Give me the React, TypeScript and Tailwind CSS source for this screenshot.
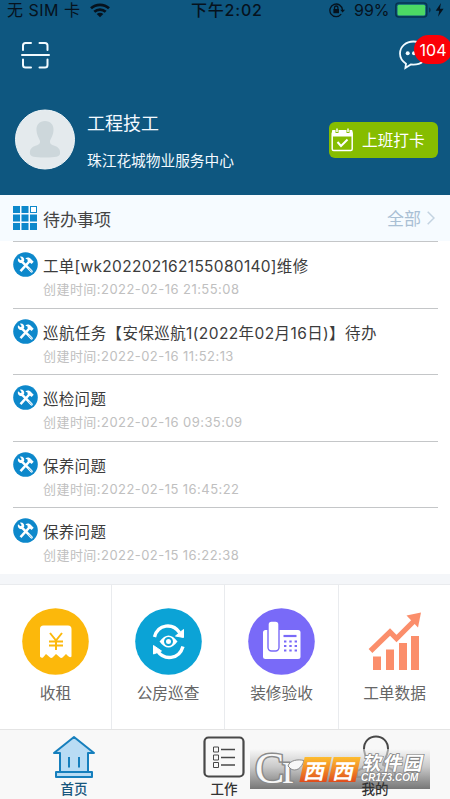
import React from 'react';

const FONT = "font-['Inter','Noto_Sans_CJK_SC',sans-serif]";

type Todo = {
  title: string;
  time: string;
  spacing: string;
};

const todos: Todo[] = [
  { title: '工单[wk202202162155080140]维修', time: '2022-02-16 21:55:08', spacing: 'tracking-[0.3px]' },
  { title: '巡航任务【安保巡航1(2022年02月16日)】待办', time: '2022-02-16 11:52:13', spacing: 'tracking-[0.4px]' },
  { title: '巡检问题', time: '2022-02-16 09:35:09', spacing: 'tracking-[0.3px]' },
  { title: '保养问题', time: '2022-02-15 16:45:22', spacing: 'tracking-[0.3px]' },
  { title: '保养问题', time: '2022-02-15 16:22:38', spacing: 'tracking-[0.3px]' },
];

const ToolsIcon: React.FC = () => (
  <svg className="mt-[10px] h-[25px] w-[25px] shrink-0" viewBox="0 0 25 25">
    <circle cx="12.5" cy="12.5" r="12.3" fill="#0d88cb" />
    <g stroke="#fff" strokeLinecap="round" fill="none">
      <path d="M8.5 9.2L18.6 19.4" strokeWidth="2.5" />
      <path d="M7.5 19.2L16.8 9" strokeWidth="2.5" strokeLinecap="butt" />
    </g>
    <path d="M5 6.2L7.6 8.3L8.8 7.2L7 4.7C9.7 4.2 11.7 6 11.2 8.8L8.8 11.1C6.2 11.4 4.2 9.2 5 6.2Z" fill="#fff" />
    <path d="M12.3 6.4C14.5 5 16.8 5.6 18.2 7.2L20.7 9.8L18.6 11.9L16.5 10.2L14.7 9.6L14.5 7.6Z" fill="#fff" />
    <path d="M15.8 16.5L18.9 19.7" stroke="#0d88cb" strokeWidth="0.6" />
  </svg>
);

const StatusBar: React.FC = () => (
  <div className="flex h-5 items-center text-[16px] leading-5 text-[#06121d]">
    <span className="ml-[7px] w-[83px] whitespace-nowrap tracking-[0.5px]">无 SIM 卡</span>
    <svg className="h-[15px] w-5" viewBox="0 0 20 15" fill="none" stroke="#06121d" strokeWidth="2.7">
      <path d="M1 5.3C6 0.6 14 0.6 19 5.3" />
      <path d="M4.3 8.8C7.6 5.8 12.4 5.8 15.7 8.8" />
      <path d="M10 14.2L6.7 11C8.6 9.4 11.4 9.4 13.3 11Z" fill="#06121d" stroke="none" />
    </svg>
    <span className="ml-[81px] w-[73px] whitespace-nowrap font-medium tracking-[0.8px]">下午2:02</span>
    <svg className="ml-[65px] h-4 w-4" viewBox="0 0 16 16" fill="none" stroke="#06121d" strokeWidth="1.3">
      <path d="M12.2 12.2A6.3 6.3 0 1 1 13.5 8" />
      <path d="M11.2 7.7H16L13.6 10.6Z" fill="#06121d" stroke="none" />
      <rect x="4.4" y="7" width="5.6" height="4.2" fill="#06121d" stroke="none" />
      <path d="M5.5 7V5.4C5.5 3.5 8.9 3.5 8.9 5.4V7" />
    </svg>
    <span className="ml-[9px] w-9 whitespace-nowrap">99%</span>
    <svg className="ml-[5px] h-4 w-[52px]" viewBox="0 0 52 16">
      <rect x="0.8" y="1" width="31" height="14" rx="3" fill="none" stroke="#073450" strokeWidth="1.5" />
      <rect x="2.5" y="2.7" width="27.7" height="10.7" rx="1.5" fill="#4cd964" />
      <path d="M34 5.5C36.3 6 36.3 10 34 10.5Z" fill="#073450" />
      <path d="M46 1L40.7 8.8H44.3L43 14.7L48.6 6.7H44.9Z" fill="#06121d" />
    </svg>
  </div>
);

const Header: React.FC = () => (
  <header className="h-[195px] bg-[#0e5780]">
    <StatusBar />
    <div className="flex h-[62px] items-start justify-between pt-[20px] pl-[21px]">
      <svg className="mt-px h-[29px] w-[29px]" viewBox="0 0 29 29" fill="none" stroke="#f2fbff" strokeWidth="2" strokeLinecap="round">
        <path d="M2 9V4.5Q2 2 4.5 2H10M18.5 2H24Q26.5 2 26.5 4.5V9M2 18.5V24Q2 26.5 4.5 26.5H10M18.5 26.5H24Q26.5 26.5 26.5 24V18.5" />
        <path d="M1 14H28" />
      </svg>
      <div className="relative h-[30px] w-[51px]">
        <svg className="h-[30px] w-[30px]" viewBox="0 0 30 30" fill="none" stroke="#f2fbff" strokeWidth="1.8">
          <path d="M7 23.7C3 21 1 17.7 1 13.5C1 6.5 7 1.5 14.5 1.5S28 6.5 28 13.3S22 24.6 14.5 24.6L11.8 24.4L6.4 28Z" />
          <g fill="#f2fbff" stroke="none">
            <circle cx="8.7" cy="13.3" r="2" />
            <circle cx="15" cy="13.3" r="2" />
            <circle cx="21" cy="13.3" r="2" />
          </g>
        </svg>
        <span className="absolute top-[-5px] left-[15px] flex h-[29px] w-[38px] items-center justify-center rounded-full bg-[#fb0007] text-[16px] text-white">
          104
        </span>
      </div>
    </div>
    <div className="flex pt-[27px] pl-[15px]">
      <svg className="h-[61px] w-[60px]" viewBox="0 0 60 61">
        <circle cx="30" cy="30.5" r="29.5" fill="#e4eaed" stroke="#f1f6f8" strokeWidth="1" />
        <path
          d="M30 12C35.5 12 39 16 38.5 21.5C38 27 35.5 30 35 32C34.6 35 37 36 40 37C44 38.5 45.5 41 45 45C44.5 47.5 41 48.5 30 48.5S15.5 47.5 15 45C14.5 41 16 38.5 20 37C23 36 25.4 35 25 32C24.5 30 22 27 21.5 21.5C21 16 24.5 12 30 12Z"
          fill="#cdd7db"
        />
      </svg>
      <div className="ml-3 w-[242px] text-[#f4faff]">
        <p className="mt-[3px] text-[18px] leading-[24px]">工程技工</p>
        <p className="mt-[15px] text-[14.7px] leading-[20px]">珠江花城物业服务中心</p>
      </div>
      <button className="mt-[13px] flex h-9 w-[109px] items-center rounded-[6px] bg-[#86bd00] text-white">
        <svg className="ml-[2px] h-6 w-[23px]" viewBox="0 0 23 24" fill="none" stroke="#fff">
          <rect x="1.2" y="4" width="20" height="18.5" rx="1.5" strokeWidth="1.5" />
          <path d="M1.5 2.5H21V8H1.5Z" fill="#fff" strokeWidth="1" />
          <path d="M6 0V5M17 0V5" stroke="#86bd00" strokeWidth="3" />
          <path d="M6 0.5V4M17 0.5V4" strokeWidth="1.5" />
          <path d="M6.5 14L10 18L16.5 11.5" strokeWidth="2" />
        </svg>
        <span className="mt-px ml-[8px] whitespace-nowrap text-[15.7px] leading-5">上班打卡</span>
      </button>
    </div>
  </header>
);

const TodoHeader: React.FC = () => (
  <div className="flex h-[46px] items-center bg-[#f6fbff] pr-[15px] pl-[13px]">
    <svg className="h-6 w-6" viewBox="0 0 24 24" fill="#0d88cb">
      <path d="M0 0H7V7H0ZM8.5 0H15.5V7H8.5ZM0 8.5H7V15.5H0ZM8.5 8.5H15.5V15.5H8.5ZM17 8.5H24V15.5H17ZM0 17H7V24H0ZM8.5 17H15.5V24H8.5ZM17 17H24V24H17Z" />
      <rect x="17.5" y="0.5" width="6" height="6" fill="#fff" stroke="#0d88cb" />
    </svg>
    <h2 className="mt-[3px] ml-[6px] flex-1 text-[17px] leading-6 text-[#444]">待办事项</h2>
    <span className="mt-[2px] text-[17px] leading-6 text-[#a9bfd4]">全部</span>
    <svg className="ml-[6px] h-[14px] w-[8px]" viewBox="0 0 8 14" fill="none" stroke="#c3d3e1" strokeWidth="1.5">
      <path d="M0.7 0.7L7 7L0.7 13.3" />
    </svg>
  </div>
);

const TodoRow: React.FC<{ todo: Todo }> = ({ todo }) => (
  <li className="ml-[13px] flex h-[66.5px] w-[425px] border-t-[1.5px] border-[#c4c6c8]">
    <ToolsIcon />
    <div className="ml-[5px] whitespace-nowrap">
      <p className={`mt-[14px] text-[15.5px] leading-[22px] text-[#3c3c3c] ${todo.spacing}`}>{todo.title}</p>
      <p className="mt-[2px] text-[13px] leading-[18px] tracking-[0.45px] text-[#c0c0c0]">创建时间:{todo.time}</p>
    </div>
  </li>
);

const RentIcon: React.FC = () => (
  <svg className="h-[67px] w-[67px]" viewBox="0 0 67 67">
    <circle cx="33.5" cy="33.5" r="33.3" fill="#fcb80b" />
    <path d="M18 21Q18 17.5 21.5 17.5H46Q49.5 17.5 49.5 21V48.5Q48 50 46 48L44 46L40.5 49.5Q39 50.5 37.5 49L34 46L30.5 49.5Q29 50.5 27.5 49L24 46L21 49.5Q19.5 50.5 18 48.5Z" fill="#fff" />
    <path d="M28 25L34 32.5L40 25M34 32V42M27 33.5H41M27 37.5H41" fill="none" stroke="#fcb80b" strokeWidth="2" />
  </svg>
);

const PatrolIcon: React.FC = () => (
  <svg className="h-[67px] w-[67px]" viewBox="0 0 67 67" fill="none">
    <circle cx="33.5" cy="33.5" r="33.3" fill="#0ba3d6" />
    <path d="M19.5 29C23 15.5 38 15 44.5 24.5M48 38.5C44 52 29 52.5 22.5 43" stroke="#fff" strokeWidth="3.4" />
    <path d="M48.5 21.5V29.5L40.5 28ZM18.5 37.5L26.5 43L18.5 46Z" fill="#fff" stroke="#fff" />
    <path d="M24.5 33.5Q33.5 21.5 42.5 33.5Q33.5 45.5 24.5 33.5Z" fill="#fff" />
    <circle cx="33.5" cy="33.5" r="3.5" stroke="#0ba3d6" strokeWidth="2" />
  </svg>
);

const PhoneIcon: React.FC = () => (
  <svg className="h-[67px] w-[67px]" viewBox="0 0 67 67">
    <circle cx="33.5" cy="33.5" r="33.3" fill="#796af8" />
    <rect x="15" y="22" width="37.5" height="29" rx="2.5" fill="#fff" />
    <rect x="20" y="13" width="11" height="30" rx="3.5" fill="#fff" stroke="#796af8" strokeWidth="1.4" />
    <path d="M35.5 28H48.5" stroke="#796af8" strokeWidth="2.2" />
    <path d="M36 33.5H49M36 38H49M36 42.5H49" stroke="#796af8" strokeWidth="2" strokeDasharray="2.4 2.9" />
  </svg>
);

const ChartIcon: React.FC = () => (
  <svg className="h-[67px] w-[67px]" viewBox="0 0 67 67" fill="#fb8e6b">
    <path d="M12 48.5H20V62H12ZM25 41.5H33V62H25ZM38 35H46V62H38ZM50 28H58V62H50Z" />
    <path d="M9.500 43L29 24L35.500 30.500L54 12" fill="none" stroke="#fb8e6b" strokeWidth="5.3" />
    <path d="M45.5 7.500L60 4.500L57 19.500Z" />
  </svg>
);

const entries = [
  { label: '收租', icon: <RentIcon /> },
  { label: '公房巡查', icon: <PatrolIcon /> },
  { label: '装修验收', icon: <PhoneIcon /> },
  { label: '工单数据', icon: <ChartIcon /> },
];

const Watermark: React.FC = () => (
  <div className="absolute top-[19px] left-[2px] flex h-[40px] w-[180px] bg-linear-to-b from-[#f8f8f8]/50 via-[#bdbdbd]/80 via-45% to-[#777]">
    <span className="mt-px ml-[5px] w-[48px] font-['Liberation_Serif',serif] text-[44px] leading-[37px] tracking-[-2px] text-[#f8f8f8] [-webkit-text-stroke:3px_#8a8a8a] [paint-order:stroke_fill]">
      Cr
    </span>
    <svg className="absolute top-[9px] left-[37px] h-[15px] w-[18px]" viewBox="0 0 18 15" fill="#f8f8f8" stroke="#8a8a8a">
      <path d="M1 8C3 2 11 1 17 2.500C15 10 9 14 4 11Z" />
    </svg>
    <div className="mt-[8px] -ml-px flex h-[25px] gap-[2px] font-['Noto_Sans_CJK_SC',sans-serif] text-[21px] leading-[24px] font-bold text-white">
      <span className="flex w-[27px] -skew-x-12 items-center justify-center bg-linear-to-b from-[#fdbd30] to-[#df4b1d]">西</span>
      <span className="flex w-[27px] -skew-x-12 items-center justify-center bg-linear-to-b from-[#fdbd30] to-[#df4b1d]">西</span>
    </div>
    <div className="mt-[6px] ml-[5px] whitespace-nowrap text-white [paint-order:stroke_fill] [-webkit-text-stroke:1.5px_#858585]">
      <p className="-skew-x-12 text-[19px] leading-[18px] font-bold tracking-[1.5px]">软件园</p>
      <p className="-ml-[2px] font-['Liberation_Sans',sans-serif] text-[10px] leading-[9px] font-bold italic">CR173.COM</p>
    </div>
  </div>
);

const TabBar: React.FC = () => (
  <nav className="grid h-[70px] grid-cols-[148px_152px_150px] border-t border-[#e4e4e4] bg-[#f8f8f8] text-[13.5px] font-medium text-[#333]">
    <div className="flex flex-col items-center pt-[5px] text-[#16567d]">
      <svg className="h-[44px] w-[44px]" viewBox="0 0 44 44" fill="#b9dcf4" stroke="#167fbd" strokeWidth="2" strokeLinejoin="round">
        <path d="M22 2L42 18H36V37H40V42H4V37H8V18H2Z" />
        <path d="M8 37H36M17 22V32.5M27 22V32.5" />
      </svg>
      <span className="mt-[1px] leading-[18px]">首页</span>
    </div>
    <div className="flex flex-col items-center pt-[6px]">
      <svg className="h-[42px] w-[42px]" viewBox="0 0 42 42" fill="none" stroke="#484848">
        <rect x="1.5" y="1.5" width="39" height="39" rx="4" strokeWidth="2.2" />
        <path d="M10.5 11H15.5V16H10.5ZM10.5 19H15.5V24H10.5ZM10.5 26.5H15.5V31.5H10.5Z" strokeWidth="1" />
        <path d="M18 13.5H32M18 21.5H32M18 29H32" strokeWidth="1.4" />
      </svg>
      <span className="mt-[2px] leading-[18px]">工作</span>
    </div>
    <div className="relative -ml-[52px] flex w-[202px] flex-col items-center pt-[5px]">
      <svg className="h-[44px] w-[44px] translate-x-[27px]" viewBox="0 0 44 44" fill="none" stroke="#484848" strokeWidth="2">
        <path d="M10 15C9 -3 35 -3 34 15C33 23 29 26 29 30L41 36V42H3V36L15 30C15 26 11 23 10 15Z" />
      </svg>
      <Watermark />
      <span className="relative mt-[1px] translate-x-[26px] leading-[18px]">我的</span>
    </div>
  </nav>
);

const App: React.FC = () => (
  <div className={`flex h-[799px] w-[450px] flex-col overflow-hidden bg-white ${FONT}`}>
    <Header />
    <TodoHeader />
    <ul className="h-[332.5px] shrink-0">
      {todos.map((todo, index) => (
        <TodoRow key={index} todo={todo} />
      ))}
    </ul>
    <div className="h-[11px] shrink-0 border-b border-[#e9ebee] bg-[#f4f6f9]" />
    <section className="grid flex-1 grid-cols-[112px_113px_114px_111px]">
      {entries.map((entry) => (
        <div key={entry.label} className="flex flex-col items-center border-r border-[#e9ebee] pt-[23px] last:border-r-0">
          {entry.icon}
          <span className="mt-[8px] text-[15.7px] leading-[22px] text-[#666]">{entry.label}</span>
        </div>
      ))}
    </section>
    <TabBar />
  </div>
);

export default App;
